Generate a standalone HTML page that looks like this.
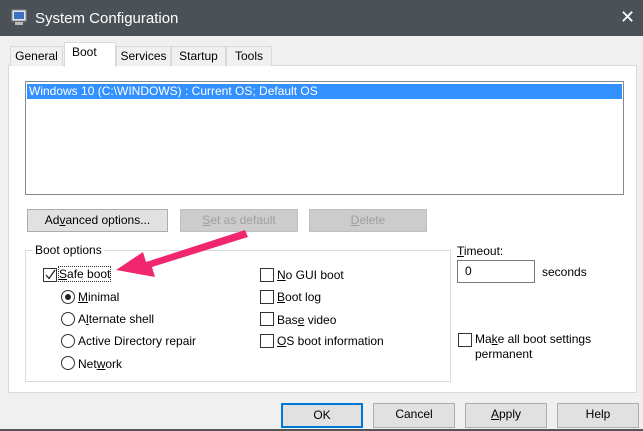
<!DOCTYPE html><html><head><style>
body{margin:0;width:643px;height:431px;background:#f0f0f0;font-family:"Liberation Sans",sans-serif;font-size:12px;color:#000;position:relative;overflow:hidden}
.a{position:absolute}
.btn{position:absolute;height:23px;border:1px solid #adadad;background:#e1e1e1;box-sizing:border-box;text-align:center;line-height:21px}
.dis{color:#a0a0a0;background:#ccc;border-color:#bfbfbf}
.cb{position:absolute;width:12px;height:12px;border:1px solid #333;background:#fff}
.rb{position:absolute;width:12px;height:12px;border:1px solid #333;border-radius:50%;background:#fff}
.tab{position:absolute;top:46px;height:20px;border:1px solid #d9d9d9;border-bottom:none;background:#f0f0f0;box-sizing:border-box;text-align:center;line-height:19px}
u{text-decoration:underline}
</style></head><body>
<div class="a" style="left:0;top:0;width:643px;height:36px;background:#4b5257"></div>
<svg class="a" style="left:11px;top:9px" width="16" height="18"><rect x="1" y="1" width="14" height="11" fill="#dfe6f0" stroke="#888"/><rect x="3" y="3" width="10" height="7" fill="#3c6fc2"/><rect x="4" y="13" width="8" height="3" fill="#bbb"/></svg>
<div class="a" style="left:35px;top:10px;color:#fff;font-size:15px">System Configuration</div>
<div class="a" style="left:620px;top:7px;color:#fff;font-size:18px">✕</div>
<div class="a" style="left:8px;top:65px;width:629px;height:328px;background:#fff;border:1px solid #d9d9d9;box-sizing:border-box"></div>
<div class="tab" style="left:10px;width:53px">General</div>
<div class="tab" style="left:64px;top:42px;height:25px;width:52px;background:#fff;text-align:left;padding-left:7px">Boot</div>
<div class="tab" style="left:116px;width:55px">Services</div>
<div class="tab" style="left:171px;width:55px">Startup</div>
<div class="tab" style="left:226px;width:46px">Tools</div>
<div class="a" style="left:25px;top:81px;width:599px;height:114px;border:1px solid #828790;box-sizing:border-box;background:#fff"></div>
<div class="a" style="left:27px;top:84px;width:595px;height:15px;background:#3390ff;color:#fff;line-height:15px;padding-left:2px;box-sizing:border-box">Windows 10 (C:\WINDOWS) : Current OS; Default OS</div>
<div class="btn" style="left:27px;top:209px;width:141px">Ad<u>v</u>anced options...</div>
<div class="btn dis" style="left:180px;top:209px;width:118px"><u>S</u>et as default</div>
<div class="btn dis" style="left:309px;top:209px;width:118px"><u>D</u>elete</div>
<div class="a" style="left:25px;top:250px;width:426px;height:132px;border:1px solid #dcdcdc;box-sizing:border-box"></div>
<div class="a" style="left:33px;top:243px;background:#fff;padding:0 2px">Boot options</div>
<div class="cb" style="left:43px;top:268px"></div>
<svg class="a" style="left:44px;top:269px" width="12" height="12"><path d="M2 6 L5 9.5 L11 1" stroke="#222" stroke-width="1.3" fill="none"/></svg>
<div class="a" style="left:59px;top:267px;outline:1px dotted #333"><u>S</u>afe boot</div>
<div class="rb" style="left:61px;top:290px"></div><div class="a" style="left:65px;top:294px;width:6px;height:6px;border-radius:50%;background:#222"></div>
<div class="a" style="left:78px;top:290px"><u>M</u>inimal</div>
<div class="rb" style="left:61px;top:312px"></div><div class="a" style="left:78px;top:312px">A<u>l</u>ternate shell</div>
<div class="rb" style="left:61px;top:334px"></div><div class="a" style="left:78px;top:334px">Active Directory repair</div>
<div class="rb" style="left:61px;top:356px"></div><div class="a" style="left:78px;top:357px">Net<u>w</u>ork</div>
<div class="cb" style="left:260px;top:268px"></div><div class="a" style="left:277px;top:268px"><u>N</u>o GUI boot</div>
<div class="cb" style="left:260px;top:290px"></div><div class="a" style="left:277px;top:290px"><u>B</u>oot log</div>
<div class="cb" style="left:260px;top:312px"></div><div class="a" style="left:277px;top:313px">Bas<u>e</u> video</div>
<div class="cb" style="left:260px;top:334px"></div><div class="a" style="left:277px;top:334px"><u>O</u>S boot information</div>
<div class="a" style="left:457px;top:244px"><u>T</u>imeout:</div>
<div class="a" style="left:457px;top:260px;width:78px;height:23px;border:1px solid #7a7a7a;box-sizing:border-box;padding:3px 0 0 7px">0</div>
<div class="a" style="left:542px;top:265px">seconds</div>
<div class="cb" style="left:458px;top:333px"></div>
<div class="a" style="left:475px;top:332px;line-height:15px">Ma<u>k</u>e all boot settings<br>permanent</div>
<div class="btn" style="left:281px;top:403px;width:82px;height:25px;border:2px solid #0078d7;line-height:21px">OK</div>
<div class="btn" style="left:373px;top:403px;width:82px;height:25px">Cancel</div>
<div class="btn" style="left:465px;top:403px;width:82px;height:25px"><u>A</u>pply</div>
<div class="btn" style="left:557px;top:403px;width:82px;height:25px">Help</div>
<div class="a" style="left:0;top:429px;width:643px;height:2px;background:#555"></div>
<svg class="a" style="left:110px;top:222px" width="140" height="60"><polygon points="135,8 138,15 42,45 45,55 6,48 33,30 36,40" fill="#f0276e"/></svg>
</body></html>
